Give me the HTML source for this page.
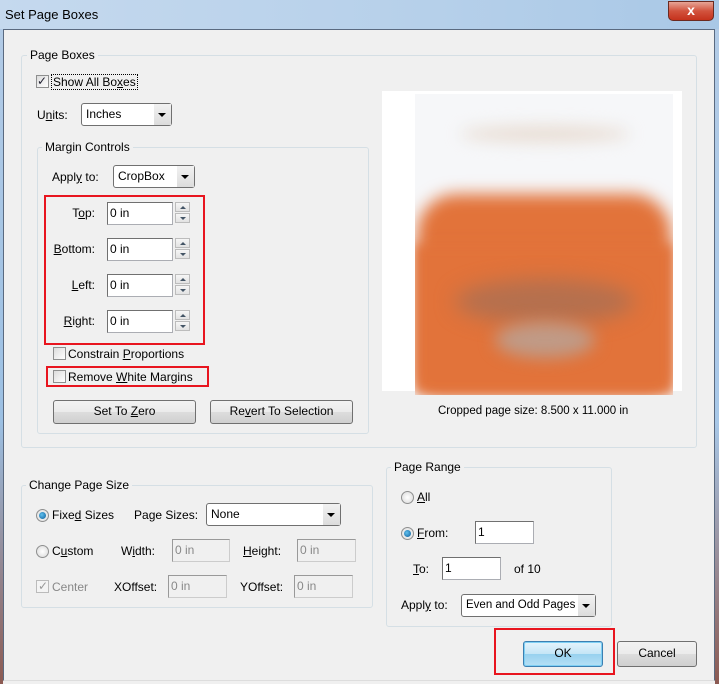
<!DOCTYPE html>
<html><head><meta charset="utf-8"><style>
*{box-sizing:border-box;margin:0;padding:0}
body{width:719px;height:684px;overflow:hidden;position:relative;background:#f0f0f0;font-family:"Liberation Sans",sans-serif;font-size:12px;color:#000}
.a{position:absolute;white-space:nowrap}
.t{position:absolute;white-space:nowrap;line-height:14px}
.g{position:absolute;border:1px solid #d5dfe5;border-radius:3px}
.gl{position:absolute;background:#f0f0f0;padding:0 3px;line-height:14px;white-space:nowrap}
.in{position:absolute;height:23px;background:#fff;border:1px solid #abadb3;border-top-color:#707070;border-left-color:#707070;padding:2px 0 0 2px;line-height:16px}
.dis{background:#f0f0f0;color:#888;border-color:#ccc;border-top-color:#999;border-left-color:#999}
.sel{position:absolute;height:23px;border:1px solid #707070;border-radius:3px;background:#fff;padding:3px 0 0 4px;line-height:15px}
.sel:after{content:"";position:absolute;right:0;top:0;width:17px;height:21px;background:linear-gradient(#f2f2f2,#dcdcdc)}
.sel i{position:absolute;right:5px;top:9px;width:0;height:0;border-left:4px solid transparent;border-right:4px solid transparent;border-top:4px solid #000;z-index:2}
.btn{position:absolute;height:24px;border:1px solid #707070;border-radius:3px;background:linear-gradient(#f2f2f2 0,#ebebeb 50%,#dddddd 51%,#cfcfcf 100%);text-align:center;line-height:21px}
.cb{position:absolute;width:13px;height:13px;border:1px solid #8e8f8f;background:linear-gradient(135deg,#dcdcdc,#fff)}
.rd{position:absolute;width:13px;height:13px;border:1px solid #8e8f8f;border-radius:50%;background:radial-gradient(#fff,#d8d8d8)}
.rd.on:after{content:"";position:absolute;left:2px;top:2px;width:7px;height:7px;border-radius:50%;background:radial-gradient(circle at 40% 40%,#5fc0ee,#0b5b98)}
.sp{position:absolute;width:15px;height:22px}
.sp div{position:absolute;left:0;width:15px;height:10px;border:1px solid #bcbcbc;background:linear-gradient(#f6f6f6,#e2e2e2)}
.sp div i{position:absolute;left:4px;width:0;height:0;border-left:3px solid transparent;border-right:3px solid transparent}
.red{position:absolute;border:2px solid #e8151f}
u{text-decoration:underline}
</style></head><body>
<div class="a" style="left:0;top:0;width:719px;height:29px;background:linear-gradient(90deg,#c5d9ee,#b6d0ea 60%,#a9c8e6)"></div>
<div class="t" style="left:5px;top:8px;font-size:13px">Set Page Boxes</div>
<div class="a" style="left:668px;top:1px;width:46px;height:20px;border:1px solid #6b2a20;border-radius:0 0 5px 5px;background:linear-gradient(#e6a596,#d2533e 50%,#c5321c);color:#fff;text-align:center;font-weight:bold;font-size:14px;line-height:17px">x</div>
<div class="a" style="left:0;top:29px;width:3px;height:655px;background:linear-gradient(#b2cbe6,#9cc0e3 60%,#8c5a52)"></div>
<div class="a" style="left:715px;top:29px;width:4px;height:655px;background:linear-gradient(#b2cbe6,#a8c8e8 60%,#8c5a52)"></div>
<div class="a" style="left:3px;top:29px;width:712px;height:652px;border:1px solid #5a6a80;border-bottom-color:#ddd"></div>

<div class="g" style="left:21px;top:55px;width:676px;height:393px"></div>
<div class="gl" style="left:27px;top:48px">Page Boxes</div>
<div class="cb" style="left:36px;top:75px"></div><div class="t" style="left:37px;top:74px;font-size:12px;color:#223">✓</div>
<div class="t" style="left:51px;top:74px;border:1px dotted #000;padding:0 1px">Show All Bo<u>x</u>es</div>
<div class="t" style="left:37px;top:108px">U<u>n</u>its:</div>
<div class="sel" style="left:81px;top:103px;width:91px">Inches<i></i></div>

<div class="g" style="left:37px;top:147px;width:332px;height:287px"></div>
<div class="gl" style="left:42px;top:140px">Margin Controls</div>
<div class="t" style="left:52px;top:170px">Appl<u>y</u> to:</div>
<div class="sel" style="left:113px;top:165px;width:82px">CropBox<i></i></div>

<div class="red" style="left:44px;top:195px;width:161px;height:150px"></div>
<div class="t" style="left:40px;top:206px;width:55px;text-align:right">T<u>o</u>p:</div>
<div class="t" style="left:40px;top:242px;width:55px;text-align:right"><u>B</u>ottom:</div>
<div class="t" style="left:40px;top:278px;width:55px;text-align:right"><u>L</u>eft:</div>
<div class="t" style="left:40px;top:314px;width:55px;text-align:right"><u>R</u>ight:</div>
<div class="in" style="left:107px;top:202px;width:66px">0 in</div>
<div class="in" style="left:107px;top:238px;width:66px">0 in</div>
<div class="in" style="left:107px;top:274px;width:66px">0 in</div>
<div class="in" style="left:107px;top:310px;width:66px">0 in</div>
<div class="sp" style="left:175px;top:202px"><div style="top:0"><i style="top:3px;border-bottom:3px solid #456"></i></div><div style="top:11px"><i style="top:3px;border-top:3px solid #456"></i></div></div>
<div class="sp" style="left:175px;top:238px"><div style="top:0"><i style="top:3px;border-bottom:3px solid #456"></i></div><div style="top:11px"><i style="top:3px;border-top:3px solid #456"></i></div></div>
<div class="sp" style="left:175px;top:274px"><div style="top:0"><i style="top:3px;border-bottom:3px solid #456"></i></div><div style="top:11px"><i style="top:3px;border-top:3px solid #456"></i></div></div>
<div class="sp" style="left:175px;top:310px"><div style="top:0"><i style="top:3px;border-bottom:3px solid #456"></i></div><div style="top:11px"><i style="top:3px;border-top:3px solid #456"></i></div></div>

<div class="cb" style="left:53px;top:347px"></div>
<div class="t" style="left:68px;top:347px">Constrain <u>P</u>roportions</div>
<div class="red" style="left:46px;top:366px;width:163px;height:21px"></div>
<div class="cb" style="left:53px;top:370px"></div>
<div class="t" style="left:68px;top:370px">Remove <u>W</u>hite Margins</div>
<div class="btn" style="left:53px;top:400px;width:143px">Set To <u>Z</u>ero</div>
<div class="btn" style="left:210px;top:400px;width:143px">Re<u>v</u>ert To Selection</div>

<div class="a" style="left:382px;top:91px;width:300px;height:300px;background:#fff"></div>
<div class="a" style="left:415px;top:94px;width:258px;height:301px;background:#f6f7f9;overflow:hidden">
 <div class="a" style="left:2px;top:100px;width:254px;height:200px;background:#e2733a;border-radius:40px 40px 20px 20px;filter:blur(8px)"></div>
 <div class="a" style="left:0;top:150px;width:258px;height:150px;background:#e2733a;filter:blur(6px)"></div>
 <div class="a" style="left:40px;top:185px;width:180px;height:45px;background:#b5704e;border-radius:50%;filter:blur(10px)"></div>
 <div class="a" style="left:80px;top:228px;width:100px;height:36px;background:#c09a86;border-radius:50%;filter:blur(8px)"></div>
 <div class="a" style="left:45px;top:32px;width:170px;height:16px;background:#e8dcd2;border-radius:50%;filter:blur(8px)"></div>
</div>
<div class="t" style="left:438px;top:404px;font-size:11.5px">Cropped page size: 8.500 x 11.000 in</div>

<div class="g" style="left:21px;top:485px;width:352px;height:123px"></div>
<div class="gl" style="left:26px;top:478px">Change Page Size</div>
<div class="rd on" style="left:36px;top:509px"></div>
<div class="t" style="left:52px;top:508px">Fixe<u>d</u> Sizes</div>
<div class="t" style="left:134px;top:508px">Pa<u>g</u>e Sizes:</div>
<div class="sel" style="left:206px;top:503px;width:135px">None<i></i></div>
<div class="rd" style="left:36px;top:545px"></div>
<div class="t" style="left:52px;top:544px">C<u>u</u>stom</div>
<div class="t" style="left:121px;top:544px">W<u>i</u>dth:</div>
<div class="in dis" style="left:172px;top:539px;width:58px">0 in</div>
<div class="t" style="left:243px;top:544px"><u>H</u>eight:</div>
<div class="in dis" style="left:297px;top:539px;width:59px">0 in</div>
<div class="cb" style="left:36px;top:580px;border-color:#bbb;background:#f4f4f4"></div><div class="t" style="left:38px;top:579px;color:#999">✓</div>
<div class="t" style="left:52px;top:580px;color:#888">Center</div>
<div class="t" style="left:114px;top:580px">XOffset:</div>
<div class="in dis" style="left:168px;top:575px;width:59px">0 in</div>
<div class="t" style="left:240px;top:580px">YOffset:</div>
<div class="in dis" style="left:294px;top:575px;width:59px">0 in</div>

<div class="g" style="left:386px;top:467px;width:226px;height:160px"></div>
<div class="gl" style="left:391px;top:460px">Page Range</div>
<div class="rd" style="left:401px;top:491px"></div>
<div class="t" style="left:417px;top:490px"><u>A</u>ll</div>
<div class="rd on" style="left:401px;top:527px"></div>
<div class="t" style="left:417px;top:526px"><u>F</u>rom:</div>
<div class="in" style="left:475px;top:521px;width:59px">1</div>
<div class="t" style="left:413px;top:562px"><u>T</u>o:</div>
<div class="in" style="left:442px;top:557px;width:59px">1</div>
<div class="t" style="left:514px;top:562px">of 10</div>
<div class="t" style="left:401px;top:598px">Appl<u>y</u> to:</div>
<div class="sel" style="left:461px;top:594px;width:135px;font-size:11.5px">Even and Odd Pages<i></i></div>

<div class="red" style="left:494px;top:628px;width:121px;height:47px"></div>
<div class="btn" style="left:523px;top:641px;width:80px;height:26px;border-color:#3c7fb1;background:linear-gradient(#e5f4fc 0,#c4e5f6 50%,#98d1ef 51%,#b6e0f5 100%);box-shadow:inset 0 0 0 1px #7fd0f4;line-height:23px">OK</div>
<div class="btn" style="left:617px;top:641px;width:80px;height:26px;line-height:23px">Cancel</div>
</body></html>
